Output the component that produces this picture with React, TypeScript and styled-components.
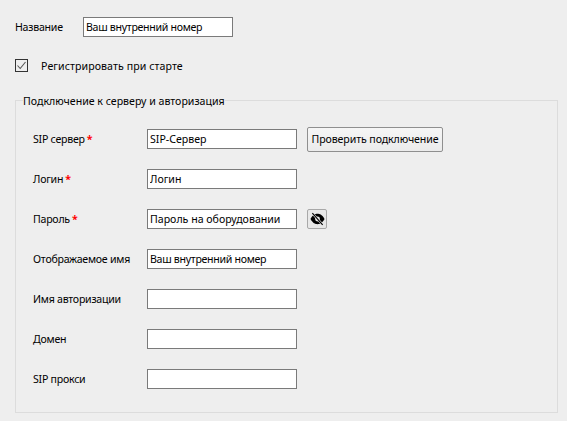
import React from 'react';
import styled, {createGlobalStyle} from 'styled-components';

const GlobalStyle = createGlobalStyle`
    html, body {
        margin: 0;
        background: #eeeeee;
    }
`;

const Page = styled.div`
    width: 567px;
    height: 421px;
    overflow: hidden;
    box-sizing: border-box;
    padding: 17px 10px 0 15px;
    background: #eeeeee;
    color: #000;
    font-family: "Noto Sans", "Open Sans", sans-serif;
    font-size: 10.6px;
    line-height: 15px;
`;

const NameRow = styled.div`
    display: flex;
    align-items: center;
    height: 20px;
`;

const NameLabel = styled.label`
    width: 68px;
    letter-spacing: -0.25px;
`;

const Input = styled.input<{$tight?: boolean}>`
    box-sizing: border-box;
    width: 150px;
    height: 20px;
    margin: 0;
    padding: 0 2px;
    border: 1px solid #7a7a7a;
    border-radius: 0;
    background: #fff;
    color: #000;
    font: inherit;
    letter-spacing: ${({$tight}) => ($tight ? '-0.3px' : '0')};
    outline: none;
`;

const CheckRow = styled.div`
    display: flex;
    align-items: center;
    gap: 13px;
    height: 13px;
    margin-top: 22px;
`;

const CheckBox = styled.span`
    box-sizing: border-box;
    display: flex;
    width: 13px;
    height: 13px;
    border: 1px solid #333;
    background: #eeeeee;

    svg {
        display: block;
    }
`;

const CheckText = styled.span`
    padding-top: 2px;
    letter-spacing: 0.08px;
`;

const Group = styled.fieldset`
    box-sizing: border-box;
    width: 543px;
    height: 321px;
    margin: 20px 0 0;
    padding: 20px 0 0 7px;
    border: 1px solid #dcdcdc;
    border-radius: 0;
    min-width: 0;
`;

const Legend = styled.legend`
    padding: 2px 0 0;
    line-height: 15px;
`;

const Form = styled.div`
    display: flex;
    flex-direction: column;
    gap: 20px;
    padding-left: 10px;
`;

const Row = styled.div`
    display: flex;
    align-items: center;
    height: 20px;
`;

const FieldLabel = styled.label`
    width: 114px;
    flex: none;
    letter-spacing: -0.25px;
`;

const Required = styled.span`
    color: #ff0000;
    font-weight: 700;
    margin-left: 2px;
`;

const CheckButton = styled.button`
    box-sizing: border-box;
    width: 136px;
    height: 25px;
    margin: 0 0 0 10px;
    padding: 0;
    flex: none;
    border: 1px solid #8f8f8f;
    border-radius: 2px;
    background: linear-gradient(#f6f6f6, #ebebeb);
    color: #000;
    font: inherit;
    letter-spacing: -0.1px;
    white-space: nowrap;
`;

const EyeButton = styled.button`
    box-sizing: border-box;
    display: flex;
    align-items: center;
    justify-content: center;
    width: 20px;
    height: 20px;
    margin: 0 0 0 10px;
    padding: 0;
    flex: none;
    border: 1px solid #a8a8a8;
    border-radius: 2px;
    background: #e8e8e8;
`;

type Field = {
    label: string;
    value?: string;
    required?: boolean;
    tight?: boolean;
    extra?: 'check' | 'eye';
};

const fields: Field[] = [
    {label: 'SIP сервер', value: 'SIP-Сервер', required: true, extra: 'check'},
    {label: 'Логин', value: 'Логин', required: true},
    {label: 'Пароль', value: 'Пароль на оборудовании', required: true, extra: 'eye'},
    {label: 'Отображаемое имя', value: 'Ваш внутренний номер', tight: true},
    {label: 'Имя авторизации'},
    {label: 'Домен'},
    {label: 'SIP прокси'},
];

function EyeOffIcon() {
    return (
        <svg width="15" height="14" viewBox="0 0 16 14">
            <path d="M0.5 7 C3 2.6 5.5 1.5 8 1.5 C10.5 1.5 13 2.6 15.5 7 C13 11.4 10.5 12.5 8 12.5 C5.5 12.5 3 11.4 0.5 7 Z" fill="#000" />
            <circle cx="8" cy="7" r="2.6" fill="#e8e8e8" />
            <path d="M2.5 0.8 L13.5 13.2" stroke="#e8e8e8" strokeWidth="2.4" />
            <path d="M2.5 0.8 L13.5 13.2" stroke="#000" strokeWidth="1.2" />
        </svg>
    );
}

function App() {
    return (
        <Page>
            <GlobalStyle />
            <NameRow>
                <NameLabel>Название</NameLabel>
                <Input $tight defaultValue="Ваш внутренний номер" />
            </NameRow>
            <CheckRow>
                <CheckBox>
                    <svg width="11" height="11" viewBox="0 0 11 11" fill="none">
                        <path d="M1.5 5.5 L4.2 8.5 L9.5 2" stroke="#555" strokeWidth="1.1" />
                    </svg>
                </CheckBox>
                <CheckText>Регистрировать при старте</CheckText>
            </CheckRow>
            <Group>
                <Legend>Подключение к серверу и авторизация</Legend>
                <Form>
                    {fields.map((field) => (
                        <Row key={field.label}>
                            <FieldLabel>
                                {field.label}
                                {field.required && <Required>*</Required>}
                            </FieldLabel>
                            <Input $tight={field.tight} defaultValue={field.value ?? ''} />
                            {field.extra === 'check' && <CheckButton>Проверить подключение</CheckButton>}
                            {field.extra === 'eye' && (
                                <EyeButton>
                                    <EyeOffIcon />
                                </EyeButton>
                            )}
                        </Row>
                    ))}
                </Form>
            </Group>
        </Page>
    );
}

export default App;
